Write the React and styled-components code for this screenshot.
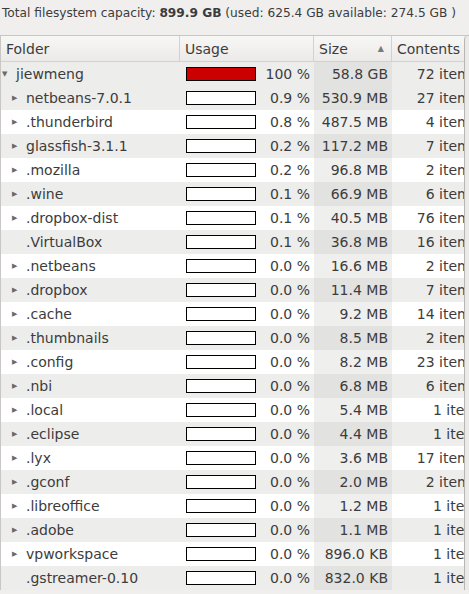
import React from 'react';
import styled, { createGlobalStyle } from 'styled-components';

const GlobalStyle = createGlobalStyle`
    html, body {
        margin: 0;
        padding: 0;
        background: #f0efee;
        font-family: 'DejaVu Sans', 'Liberation Sans', sans-serif;
        color: #3c3c3c;
    }
`;

const Window = styled.div`
    width: 469px;
    height: 594px;
    overflow: hidden;
    background: #f0efee;
`;

const Summary = styled.div`
    height: 35px;
    padding: 5px 0 0 2px;
    box-sizing: border-box;
    font-size: 12.2px;
    line-height: 17px;
    white-space: nowrap;

    b {
        font-weight: bold;
    }
`;

const Frame = styled.div`
    display: flex;
    border-top: 1px solid #c9c7c5;
`;

const Viewport = styled.div`
    width: 463px;
    overflow: hidden;
    border-left: 1px solid #c9c7c5;
    background: #fff;
`;

const Scroll = styled.div`
    flex: 1;
    border-left: 1px solid #b8b6b4;
    border-top-left-radius: 4px;
    background: #eceae8;
`;

const Grid = styled.div`
    display: grid;
    grid-template-columns: 179px 134px 78px 90px;
    width: 481px;
`;

const Head = styled.div`
    height: 25px;
    display: flex;
    align-items: center;
    padding: 0 5px;
    font-size: 14px;
    background: linear-gradient(#f7f7f6, #ebeae9);
    border-right: 1px solid #d3d1cf;
    border-bottom: 1px solid #d3d1cf;
    justify-content: space-between;
    white-space: nowrap;
`;

const SortArrow = styled.span`
    font-size: 8px;
    color: #7a7a7a;
    margin-right: 2px;
`;

const Cell = styled.div`
    height: 24px;
    display: flex;
    align-items: center;
    font-size: 14px;
    white-space: nowrap;
    overflow: hidden;
    background: ${p => (p.$sorted ? (p.$odd ? '#e2e2e1' : '#efefee') : (p.$odd ? '#ededec' : '#ffffff'))};
    justify-content: ${p => (p.$right ? 'flex-end' : 'flex-start')};
    padding: ${p => p.$pad || '0'};
`;

const Expander = styled.span`
    width: 14px;
    display: inline-block;
    font-size: 7px;
    color: #6a6a6a;
    text-align: left;
`;

const Bar = styled.div`
    width: 68px;
    height: 12px;
    border: 1px solid #000;
    background: ${p => (p.$full ? '#cc0000' : '#fff')};
    margin-right: auto;
`;

const rows = [
    ['jiewmeng', 'root', true, '100 %', '58.8 GB', '72 items'],
    ['netbeans-7.0.1', 'child', false, '0.9 %', '530.9 MB', '27 items'],
    ['.thunderbird', 'child', false, '0.8 %', '487.5 MB', '4 items'],
    ['glassfish-3.1.1', 'child', false, '0.2 %', '117.2 MB', '7 items'],
    ['.mozilla', 'child', false, '0.2 %', '96.8 MB', '2 items'],
    ['.wine', 'child', false, '0.1 %', '66.9 MB', '6 items'],
    ['.dropbox-dist', 'child', false, '0.1 %', '40.5 MB', '76 items'],
    ['.VirtualBox', 'leaf', false, '0.1 %', '36.8 MB', '16 items'],
    ['.netbeans', 'child', false, '0.0 %', '16.6 MB', '2 items'],
    ['.dropbox', 'child', false, '0.0 %', '11.4 MB', '7 items'],
    ['.cache', 'child', false, '0.0 %', '9.2 MB', '14 items'],
    ['.thumbnails', 'child', false, '0.0 %', '8.5 MB', '2 items'],
    ['.config', 'child', false, '0.0 %', '8.2 MB', '23 items'],
    ['.nbi', 'child', false, '0.0 %', '6.8 MB', '6 items'],
    ['.local', 'child', false, '0.0 %', '5.4 MB', '1 item'],
    ['.eclipse', 'child', false, '0.0 %', '4.4 MB', '1 item'],
    ['.lyx', 'child', false, '0.0 %', '3.6 MB', '17 items'],
    ['.gconf', 'child', false, '0.0 %', '2.0 MB', '2 items'],
    ['.libreoffice', 'child', false, '0.0 %', '1.2 MB', '1 item'],
    ['.adobe', 'child', false, '0.0 %', '1.1 MB', '1 item'],
    ['vpworkspace', 'child', false, '0.0 %', '896.0 KB', '1 item'],
    ['.gstreamer-0.10', 'leaf', false, '0.0 %', '832.0 KB', '1 item'],
];

const App = () => (
    <Window>
        <GlobalStyle />
        <Summary>
            Total filesystem capacity: <b>899.9 GB</b> (used: 625.4 GB available: 274.5 GB )
        </Summary>
        <Frame>
            <Viewport>
                <Grid>
                    <Head>Folder</Head>
                    <Head>Usage</Head>
                    <Head>Size<SortArrow>▲</SortArrow></Head>
                    <Head>Contents</Head>
                    {rows.map(([name, kind, full, pct, size, count], i) => {
                        const odd = i % 2 === 1 || i === 0;
                        return (
                            <React.Fragment key={name}>
                                <Cell $odd={odd} $pad={kind === 'root' ? '0 0 0 1px' : '0 0 0 11px'}>
                                    <Expander>{kind === 'root' ? '▼' : kind === 'child' ? '▶' : ''}</Expander>
                                    {name}
                                </Cell>
                                <Cell $odd={odd} $pad="0 4px 0 6px">
                                    <Bar $full={full} />
                                    {pct}
                                </Cell>
                                <Cell $odd={odd} $sorted $right $pad="0 4px 0 0">{size}</Cell>
                                <Cell $odd={odd} $right $pad="0 4px 0 0">{count}</Cell>
                            </React.Fragment>
                        );
                    })}
                </Grid>
            </Viewport>
            <Scroll />
        </Frame>
    </Window>
);

export default App;
